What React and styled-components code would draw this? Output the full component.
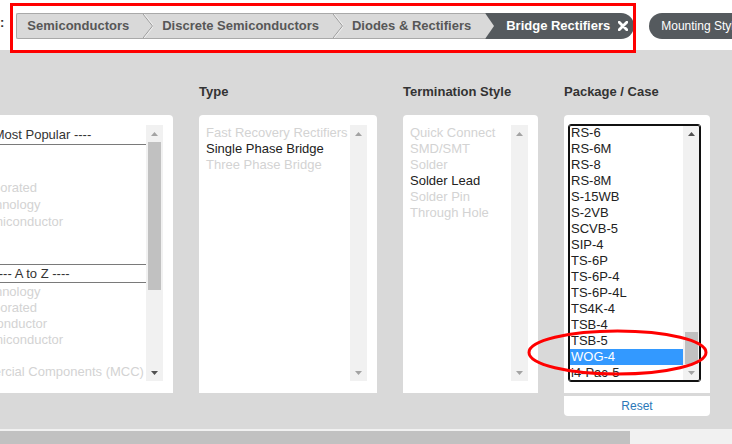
import React from 'react';
import styled, { createGlobalStyle, css } from 'styled-components';

const GlobalStyle = createGlobalStyle`
  *, *::before, *::after { box-sizing: border-box; }
  html, body { margin: 0; padding: 0; overflow: hidden; background: #d9d9d9; }
  body { font-family: "Liberation Sans", Arial, sans-serif; }
`;

const LIGHT = '#d3d3d3';
const DARK = '#222';

const Page = styled.div`
  position: relative;
  width: 732px;
  height: 444px;
  overflow: hidden;
  display: flex;
  flex-direction: column;
  background: #d9d9d9;
`;

const TopBar = styled.header`
  height: 50px;
  flex-shrink: 0;
  background: #fff;
  display: flex;
  align-items: flex-start;
  padding-top: 13px;
  overflow: hidden;
  white-space: nowrap;
`;

const TopLabel = styled.span`
  font: bold 13px/16px "Liberation Sans", Arial, sans-serif;
  color: #333;
  margin-top: 2px;
  flex-shrink: 0;
`;

const Trail = styled.nav`
  display: flex;
  height: 26px;
  margin-left: 12px;
  flex-shrink: 0;
`;

const TrailLight = styled.div`
  display: flex;
  align-items: stretch;
  background: #d9d9d9;
  border: 1px solid #a9a9a9;
  border-right: none;
  border-radius: 2px 0 0 2px;
  padding-left: 1px;
`;

const Crumb = styled.span`
  display: flex;
  align-items: center;
  padding: 0 14px 0 9px;
  font: bold 13px/16px "Liberation Sans", Arial, sans-serif;
  color: #575757;
`;

const Sep = styled.svg`
  display: block;
  flex-shrink: 0;
`;

const TrailActive = styled.span`
  position: relative;
  display: flex;
  align-items: center;
  gap: 8px;
  height: 26px;
  padding: 0 6px 0 21px;
  background: #555a5e;
  color: #fff;
  border-radius: 0 13px 13px 0;
  font: bold 13px/16px "Liberation Sans", Arial, sans-serif;
  &::before {
    content: '';
    position: absolute;
    left: 0;
    top: 0;
    border-left: 9px solid #d9d9d9;
    border-top: 13px solid transparent;
    border-bottom: 13px solid transparent;
  }
`;

const FilterPill = styled.span`
  display: flex;
  align-items: center;
  flex-shrink: 0;
  height: 26px;
  margin-left: 15px;
  padding: 0 12px;
  background: #555a5e;
  color: #fff;
  border-radius: 13px;
  font: 12px/16px "Liberation Sans", Arial, sans-serif;
`;

const Main = styled.main`
  flex: 1;
  background: #d9d9d9;
  overflow: hidden;
`;

const Columns = styled.div`
  display: flex;
  align-items: flex-start;
  gap: 26px;
  margin-left: -87px;
  padding-top: 34px;
`;

const Column = styled.section`
  display: flex;
  flex-direction: column;
  flex: 0 0 ${(p) => p.$w}px;
  width: ${(p) => p.$w}px;
`;

const Label = styled.div`
  font: bold 13px/16px "Liberation Sans", Arial, sans-serif;
  color: #333;
  margin-bottom: 15px;
  white-space: nowrap;
`;

const Panel = styled.div`
  background: #fff;
  border-radius: 4px 4px 0 0;
  padding: 9px 9px 11px 4px;
`;

const ListBox = styled.div`
  display: flex;
  height: 258px;
  border: 1px solid transparent;
  overflow: hidden;
  ${(p) =>
    p.$focused &&
    css`
      border-color: #111;
      border-radius: 3px;
      outline: 1px solid #111;
      outline-offset: -2px;
    `}
`;

const OptionList = styled.div`
  flex: 1;
  min-width: 0;
  overflow: hidden;
  font: 13px "Liberation Sans", Arial, sans-serif;
`;

const Option = styled.div`
  padding: 0 2px;
  height: ${(p) => p.$h || 16}px;
  line-height: ${(p) => p.$h || 16}px;
  white-space: nowrap;
  color: ${(p) => (p.$selected ? '#fff' : p.$on ? DARK : LIGHT)};
  background: ${(p) => (p.$selected ? '#3399ff' : 'transparent')};
`;

const GroupHead = styled.div`
  padding: ${(p) => (p.$first ? '2px 2px 1px' : '0 2px')};
  line-height: ${(p) => (p.$first ? 16 : 17)}px;
  text-align: center;
  white-space: nowrap;
  color: #333;
  border-bottom: 1px solid #7a7a7a;
  border-top: ${(p) => (p.$first ? 'none' : '1px solid #7a7a7a')};
  margin-bottom: ${(p) => (p.$first ? 0 : 1)}px;
`;

const VScroll = styled.div`
  flex: 0 0 17px;
  display: flex;
  flex-direction: column;
  background: #f1f1f1;
`;

const ArrowBtn = styled.div`
  flex: 0 0 17px;
  display: flex;
  align-items: center;
  justify-content: center;
`;

const ThumbTrack = styled.div`
  flex: 1;
  display: flex;
  flex-direction: column;
`;

const Thumb = styled.div`
  margin: ${(p) => p.$top}px 2px 0;
  height: ${(p) => p.$size}px;
  background: #c1c1c1;
`;

const ResetBox = styled.div`
  margin-top: 3px;
  height: 20px;
  background: #fff;
  border-radius: 0 0 4px 4px;
  display: flex;
  align-items: center;
  justify-content: center;
  font: 12px/14px "Liberation Sans", Arial, sans-serif;
  color: #2b78b8;
`;

const HScroll = styled.div`
  height: 15px;
  flex-shrink: 0;
  background: #f1f1f1;
  padding-top: 2px;
`;

const HThumb = styled.div`
  width: 630px;
  height: 13px;
  background: #c1c1c1;
`;

const Callout = styled.div`
  position: absolute;
  left: 10px;
  top: 3px;
  width: 626px;
  height: 50px;
  border: 3px solid #f00;
  pointer-events: none;
`;

const Ring = styled.svg`
  position: absolute;
  left: 0;
  top: 0;
  pointer-events: none;
`;

function Arrow({ dir, active }) {
  const color = active ? '#505050' : '#a3a3a3';
  return (
    <svg width="7" height="4" viewBox="0 0 7 4">
      {dir === 'up' ? (
        <polygon points="0,4 3.5,0 7,4" fill={color} />
      ) : (
        <polygon points="0,0 7,0 3.5,4" fill={color} />
      )}
    </svg>
  );
}

function ScrollBar({ upActive, downActive, thumbTop, thumbSize }) {
  return (
    <VScroll>
      <ArrowBtn>
        <Arrow dir="up" active={upActive} />
      </ArrowBtn>
      <ThumbTrack>{thumbSize ? <Thumb $top={thumbTop} $size={thumbSize} /> : null}</ThumbTrack>
      <ArrowBtn>
        <Arrow dir="down" active={downActive} />
      </ArrowBtn>
    </VScroll>
  );
}

function Chevron() {
  return (
    <Sep width="10" height="24" viewBox="0 0 10 24">
      <polyline points="0,0 9.5,12 0,24" fill="none" stroke="#9c9c9c" strokeWidth="1" />
      <polyline points="1.2,0 10.7,12 1.2,24" fill="none" stroke="#efefef" strokeWidth="1" />
    </Sep>
  );
}

function CloseIcon() {
  return (
    <svg width="10" height="10" viewBox="0 0 10 10">
      <path d="M1.2 1.2 L8.8 8.8 M8.8 1.2 L1.2 8.8" stroke="#fff" strokeWidth="2.8" strokeLinecap="round" />
    </svg>
  );
}

const popular = [
  'Rectron',
  'Vishay',
  'Diodes Incorporated',
  'Comchip Technology',
  'GeneSiC Semiconductor',
  'Bourns Inc.',
  'Sanken',
];
const aToZ = [
  'Comchip Technology',
  'Diodes Incorporated',
  'Diotec Semiconductor',
  'GeneSiC Semiconductor',
  'Littelfuse Inc.',
  'Micro Commercial Components (MCC)',
  'Rectron',
];

const types = [
  ['Fast Recovery Rectifiers', false],
  ['Single Phase Bridge', true],
  ['Three Phase Bridge', false],
];

const terminations = [
  ['Quick Connect', false],
  ['SMD/SMT', false],
  ['Solder', false],
  ['Solder Lead', true],
  ['Solder Pin', false],
  ['Through Hole', false],
];

const packages = [
  'RS-6', 'RS-6M', 'RS-8', 'RS-8M', 'S-15WB', 'S-2VB', 'SCVB-5', 'SIP-4',
  'TS-6P', 'TS-6P-4', 'TS-6P-4L', 'TS4K-4', 'TSB-4', 'TSB-5', 'WOG-4', 'i4-Pac-5',
];

export default function App() {
  return (
    <Page>
      <GlobalStyle />
      <TopBar>
        <TopLabel>:</TopLabel>
        <Trail>
          <TrailLight>
            <Crumb>Semiconductors</Crumb>
            <Chevron />
            <Crumb>Discrete Semiconductors</Crumb>
            <Chevron />
            <Crumb>Diodes &amp; Rectifiers</Crumb>
          </TrailLight>
          <TrailActive>
            Bridge Rectifiers
            <CloseIcon />
          </TrailActive>
        </Trail>
        <FilterPill>Mounting Style</FilterPill>
      </TopBar>

      <Main>
        <Columns>
          <Column $w={260}>
            <Label>Manufacturer</Label>
            <Panel>
              <ListBox>
                <OptionList>
                  <GroupHead $first>---- Most Popular ----</GroupHead>
                  {popular.map((n) => (
                    <Option key={'p' + n} $h={17}>{n}</Option>
                  ))}
                  <GroupHead>---- A to Z ----</GroupHead>
                  {aToZ.map((n) => (
                    <Option key={'a' + n}>{n}</Option>
                  ))}
                </OptionList>
                <ScrollBar upActive={false} downActive thumbTop={0} thumbSize={148} />
              </ListBox>
            </Panel>
          </Column>

          <Column $w={178}>
            <Label>Type</Label>
            <Panel>
              <ListBox>
                <OptionList>
                  {types.map(([n, on]) => (
                    <Option key={n} $on={on}>{n}</Option>
                  ))}
                </OptionList>
                <ScrollBar />
              </ListBox>
            </Panel>
          </Column>

          <Column $w={135}>
            <Label>Termination Style</Label>
            <Panel>
              <ListBox>
                <OptionList>
                  {terminations.map(([n, on]) => (
                    <Option key={n} $on={on}>{n}</Option>
                  ))}
                </OptionList>
                <ScrollBar />
              </ListBox>
            </Panel>
          </Column>

          <Column $w={146}>
            <Label>Package / Case</Label>
            <Panel>
              <ListBox $focused>
                <OptionList>
                  {packages.map((n) => (
                    <Option key={n} $on $selected={n === 'WOG-4'}>{n}</Option>
                  ))}
                </OptionList>
                <ScrollBar upActive downActive={false} thumbTop={190} thumbSize={32} />
              </ListBox>
            </Panel>
            <ResetBox>Reset</ResetBox>
          </Column>
        </Columns>
      </Main>

      <HScroll>
        <HThumb />
      </HScroll>

      <Callout />
      <Ring width="732" height="444" viewBox="0 0 732 444">
        <ellipse cx="617.5" cy="352.5" rx="88.5" ry="21.5" fill="none" stroke="#f00" strokeWidth="3" />
      </Ring>
    </Page>
  );
}
